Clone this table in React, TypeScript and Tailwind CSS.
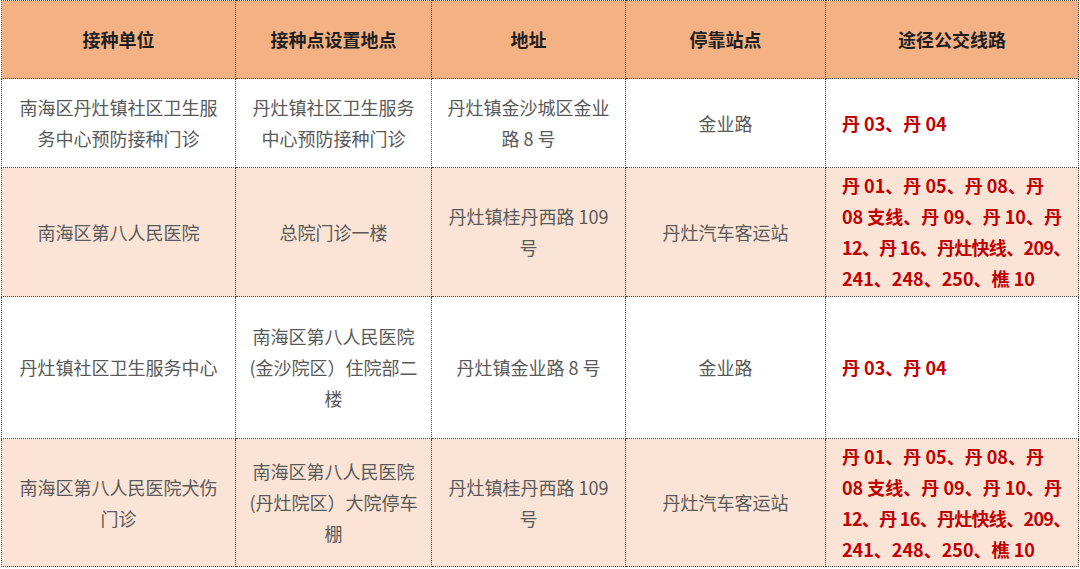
import React from "react";

type Row = {
  unit: string[];
  site: string[];
  address: string[];
  stop: string[];
  routes: string[];
  tinted: boolean;
  height: string;
};

const longRoutes = [
  "丹 01、丹 05、丹 08、丹",
  "08 支线、丹 09、丹 10、丹",
  "12、丹 16、丹灶快线、209、",
  "241、248、250、樵 10",
];

const rows: Row[] = [
  {
    unit: ["南海区丹灶镇社区卫生服", "务中心预防接种门诊"],
    site: ["丹灶镇社区卫生服务", "中心预防接种门诊"],
    address: ["丹灶镇金沙城区金业", "路 8 号"],
    stop: ["金业路"],
    routes: ["丹 03、丹 04"],
    tinted: false,
    height: "h-[89px]",
  },
  {
    unit: ["南海区第八人民医院"],
    site: ["总院门诊一楼"],
    address: ["丹灶镇桂丹西路 109", "号"],
    stop: ["丹灶汽车客运站"],
    routes: longRoutes,
    tinted: true,
    height: "h-[129px]",
  },
  {
    unit: ["丹灶镇社区卫生服务中心"],
    site: ["南海区第八人民医院", "(金沙院区）住院部二", "楼"],
    address: ["丹灶镇金业路 8 号"],
    stop: ["金业路"],
    routes: ["丹 03、丹 04"],
    tinted: false,
    height: "h-[142px]",
  },
  {
    unit: ["南海区第八人民医院犬伤", "门诊"],
    site: ["南海区第八人民医院", "(丹灶院区）大院停车", "棚"],
    address: ["丹灶镇桂丹西路 109", "号"],
    stop: ["丹灶汽车客运站"],
    routes: longRoutes,
    tinted: true,
    height: "h-[128px]",
  },
];

const headers = ["接种单位", "接种点设置地点", "地址", "停靠站点", "途径公交线路"];

function Lines({ lines }: { lines: string[] }) {
  return (
    <>
      {lines.map((l, i) => (
        <div key={i} className={`whitespace-nowrap ${l.includes("快线") ? "tracking-[-0.7px]" : ""}`}>
          {l}
        </div>
      ))}
    </>
  );
}

export default function App() {
  const cell = "border border-dotted border-[#444] align-middle";
  return (
    <div className="h-[569px] w-[1080px] bg-white pl-px font-['Noto_Sans_CJK_SC','Noto_Sans',sans-serif]">
      <table className="w-[1077px] table-fixed border-collapse text-[18px] leading-[31px]">
        <colgroup>
          <col className="w-[234px]" />
          <col className="w-[196px]" />
          <col className="w-[194px]" />
          <col className="w-[200px]" />
          <col className="w-[253px]" />
        </colgroup>
        <thead>
          <tr className="h-[78px] bg-[#f4b183]">
            {headers.map((h) => (
              <th key={h} className={`${cell} text-center font-bold text-[#1f1f1f]`}>
                {h}
              </th>
            ))}
          </tr>
        </thead>
        <tbody>
          {rows.map((r, i) => (
            <tr key={i} className={`${r.height} ${r.tinted ? "bg-[#fbe4d5]" : "bg-white"}`}>
              <td className={`${cell} text-center text-[#595959]`}>
                <Lines lines={r.unit} />
              </td>
              <td className={`${cell} text-center text-[#595959]`}>
                <Lines lines={r.site} />
              </td>
              <td className={`${cell} text-center text-[#595959]`}>
                <Lines lines={r.address} />
              </td>
              <td className={`${cell} text-center text-[#595959]`}>
                <Lines lines={r.stop} />
              </td>
              <td className={`${cell} pl-[16px] text-left font-bold text-[#c00000]`}>
                <Lines lines={r.routes} />
              </td>
            </tr>
          ))}
        </tbody>
      </table>
    </div>
  );
}
